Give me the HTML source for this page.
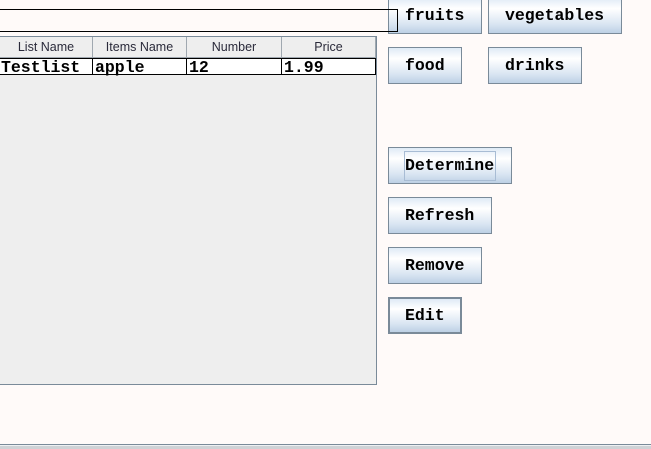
<!DOCTYPE html>
<html><head><meta charset="utf-8"><style>
html,body{margin:0;padding:0;}
body{width:651px;height:449px;background:#fffaf9;position:relative;overflow:hidden;font-family:"Liberation Sans",sans-serif;}
.tf{position:absolute;left:-2px;top:9px;width:398px;height:21px;border:1px solid #000;z-index:5;}
.tbl{position:absolute;left:-2px;top:36px;width:377px;height:347px;border:1px solid #7a8a99;background:#eeeeee;}
.hd{position:absolute;top:37px;height:21px;background:#eeeeee;border-right:1px solid #a0a8b0;border-bottom:1px solid #a0a8b0;font-size:12.5px;color:#2a2a3a;text-align:center;line-height:21px;box-sizing:border-box;}
.row{position:absolute;left:-2px;top:58px;width:376px;height:15px;border:1px solid #000;background:#fff;}
.c{position:absolute;top:59px;height:17px;font-family:"Liberation Mono",monospace;font-weight:bold;font-size:16.5px;line-height:17px;color:#000;}
.sep{position:absolute;top:59px;width:1px;height:15px;background:#000;}
.b{position:absolute;box-sizing:border-box;border:1px solid #7a8a99;background:linear-gradient(#dfeaf6 0%,#ffffff 30%,#d9e5f2 75%,#bdd0e5 100%);font-family:"Liberation Mono",monospace;font-weight:bold;font-size:16.5px;color:#000;padding-left:16px;line-height:36px;}
</style></head><body>
<div class="tbl"></div>
<div class="hd" style="left:0;width:93px;">List Name</div>
<div class="hd" style="left:93px;width:94px;">Items Name</div>
<div class="hd" style="left:187px;width:95px;">Number</div>
<div class="hd" style="left:282px;width:94px;">Price</div>
<div class="row"></div>
<div class="sep" style="left:92px"></div>
<div class="sep" style="left:186px"></div>
<div class="sep" style="left:281px"></div>
<div class="c" style="left:1px">Testlist</div>
<div class="c" style="left:95px">apple</div>
<div class="c" style="left:189px">12</div>
<div class="c" style="left:284px">1.99</div>
<div class="b" style="left:388px;top:-3px;width:94px;height:37px;">fruits</div>
<div class="b" style="left:488px;top:-3px;width:134px;height:37px;">vegetables</div>
<div class="b" style="left:388px;top:47px;width:74px;height:37px;">food</div>
<div class="b" style="left:488px;top:47px;width:94px;height:37px;">drinks</div>
<div class="b" style="left:388px;top:147px;width:124px;height:37px;"><span style="position:absolute;left:15px;top:3px;width:90px;height:28px;border:1px solid #a8bcd4;"></span>Determine</div>
<div class="b" style="left:388px;top:197px;width:104px;height:37px;">Refresh</div>
<div class="b" style="left:388px;top:247px;width:94px;height:37px;">Remove</div>
<div class="b" style="left:388px;top:297px;width:74px;height:37px;border:2px solid #7a8a99;padding-left:15px;line-height:34px;">Edit</div>
<div class="tf"></div>
<div style="position:absolute;left:0;top:444px;width:651px;height:1px;background:#7a8a99;"></div>
<div style="position:absolute;left:0;top:445px;width:651px;height:1px;background:#eef0f3;"></div>
<div style="position:absolute;left:0;top:446px;width:651px;height:3px;background:#cfd2d6;"></div>
</body></html>
